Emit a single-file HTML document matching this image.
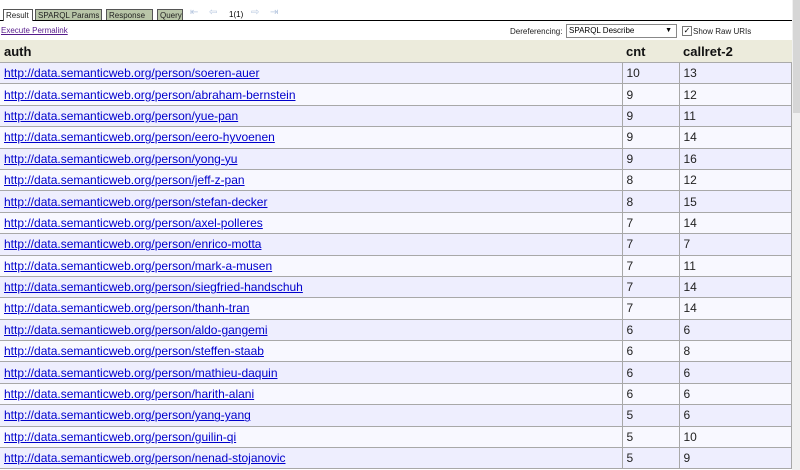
<!DOCTYPE html>
<html><head><style>
body{margin:0;width:800px;height:470px;overflow:hidden;background:#fff;font-family:"Liberation Sans",Arial,sans-serif;position:relative}
.tabs{position:absolute;left:0;top:0;width:792px;height:20px;border-bottom:1px solid #000}
.tab{position:absolute;top:9px;height:11px;font-size:8px;line-height:11px;border:1px solid #555;border-bottom:none;padding:0 2px;background:#b9c6a8;color:#222;box-sizing:border-box;white-space:nowrap;overflow:hidden}
.tab.a{background:#fff;height:12px}
.nav{position:absolute;top:7px;font-size:10px;color:#b8c8e0}
.perm{position:absolute;left:1px;top:26px;font-size:8px;color:#551a8b;text-decoration:underline;white-space:nowrap}
.deref{position:absolute;left:510px;top:27px;font-size:8px;color:#222}
.sel{position:absolute;left:566px;top:24px;width:111px;height:14px;border:1px solid #888;box-sizing:border-box;font-size:8px;line-height:12px;padding-left:2px;background:#fff}
.sel span{position:absolute;right:4px;top:0;font-size:7px}
.cb{position:absolute;left:682px;top:26px;width:8px;height:8px;border:1px solid #777;font-size:8px;line-height:8px;text-align:center}
.raw{position:absolute;left:693px;top:27px;font-size:8px;color:#222}
table{position:absolute;left:0;top:40px;width:792px;border-collapse:collapse;font-size:12px}
th{background:#ecebdc;text-align:left;font-size:13px;font-weight:bold;height:22px;padding:0 4px;color:#111;border-bottom:1px solid #aaa}
td{height:20.4px;padding:0 4px;border:1px solid #a8a8a8;color:#222}
tr:nth-child(odd) td{background:#f8f8ff}
tr:nth-child(even) td{background:#eeeefe}
td:first-child{border-left:none}
td a{color:#0000cc;text-decoration:underline}
.sb{position:absolute;left:792px;top:0;width:8px;height:470px;background:#f0f0f0}
.th{position:absolute;left:793px;top:0;width:7px;height:113px;background:#d6d6d6}
</style></head><body>
<div class="tabs">
<div class="tab a" style="left:3px;width:30px">Result</div>
<div class="tab" style="left:35px;width:67px">SPARQL Params</div>
<div class="tab" style="left:106px;width:47px">Response</div>
<div class="tab" style="left:157px;width:26px">Query</div>
<div class="nav" style="left:190px">⇤</div>
<div class="nav" style="left:209px">⇦</div>
<div style="position:absolute;left:229px;top:10px;font-size:8px">1(1)</div>
<div class="nav" style="left:251px">⇨</div>
<div class="nav" style="left:270px">⇥</div>
</div>
<div class="perm">Execute Permalink</div>
<div class="deref">Dereferencing:</div>
<div class="sel">SPARQL Describe<span>▼</span></div>
<div class="cb">✓</div>
<div class="raw">Show Raw URIs</div>
<table>
<tr><th style="width:614px">auth</th><th style="width:49px">cnt</th><th>callret-2</th></tr>
<tr><td><a>http://data.semanticweb.org/person/soeren-auer</a></td><td>10</td><td>13</td></tr>
<tr><td><a>http://data.semanticweb.org/person/abraham-bernstein</a></td><td>9</td><td>12</td></tr>
<tr><td><a>http://data.semanticweb.org/person/yue-pan</a></td><td>9</td><td>11</td></tr>
<tr><td><a>http://data.semanticweb.org/person/eero-hyvoenen</a></td><td>9</td><td>14</td></tr>
<tr><td><a>http://data.semanticweb.org/person/yong-yu</a></td><td>9</td><td>16</td></tr>
<tr><td><a>http://data.semanticweb.org/person/jeff-z-pan</a></td><td>8</td><td>12</td></tr>
<tr><td><a>http://data.semanticweb.org/person/stefan-decker</a></td><td>8</td><td>15</td></tr>
<tr><td><a>http://data.semanticweb.org/person/axel-polleres</a></td><td>7</td><td>14</td></tr>
<tr><td><a>http://data.semanticweb.org/person/enrico-motta</a></td><td>7</td><td>7</td></tr>
<tr><td><a>http://data.semanticweb.org/person/mark-a-musen</a></td><td>7</td><td>11</td></tr>
<tr><td><a>http://data.semanticweb.org/person/siegfried-handschuh</a></td><td>7</td><td>14</td></tr>
<tr><td><a>http://data.semanticweb.org/person/thanh-tran</a></td><td>7</td><td>14</td></tr>
<tr><td><a>http://data.semanticweb.org/person/aldo-gangemi</a></td><td>6</td><td>6</td></tr>
<tr><td><a>http://data.semanticweb.org/person/steffen-staab</a></td><td>6</td><td>8</td></tr>
<tr><td><a>http://data.semanticweb.org/person/mathieu-daquin</a></td><td>6</td><td>6</td></tr>
<tr><td><a>http://data.semanticweb.org/person/harith-alani</a></td><td>6</td><td>6</td></tr>
<tr><td><a>http://data.semanticweb.org/person/yang-yang</a></td><td>5</td><td>6</td></tr>
<tr><td><a>http://data.semanticweb.org/person/guilin-qi</a></td><td>5</td><td>10</td></tr>
<tr><td><a>http://data.semanticweb.org/person/nenad-stojanovic</a></td><td>5</td><td>9</td></tr>
</table>
<div class="sb"></div><div class="th"></div>
</body></html>
